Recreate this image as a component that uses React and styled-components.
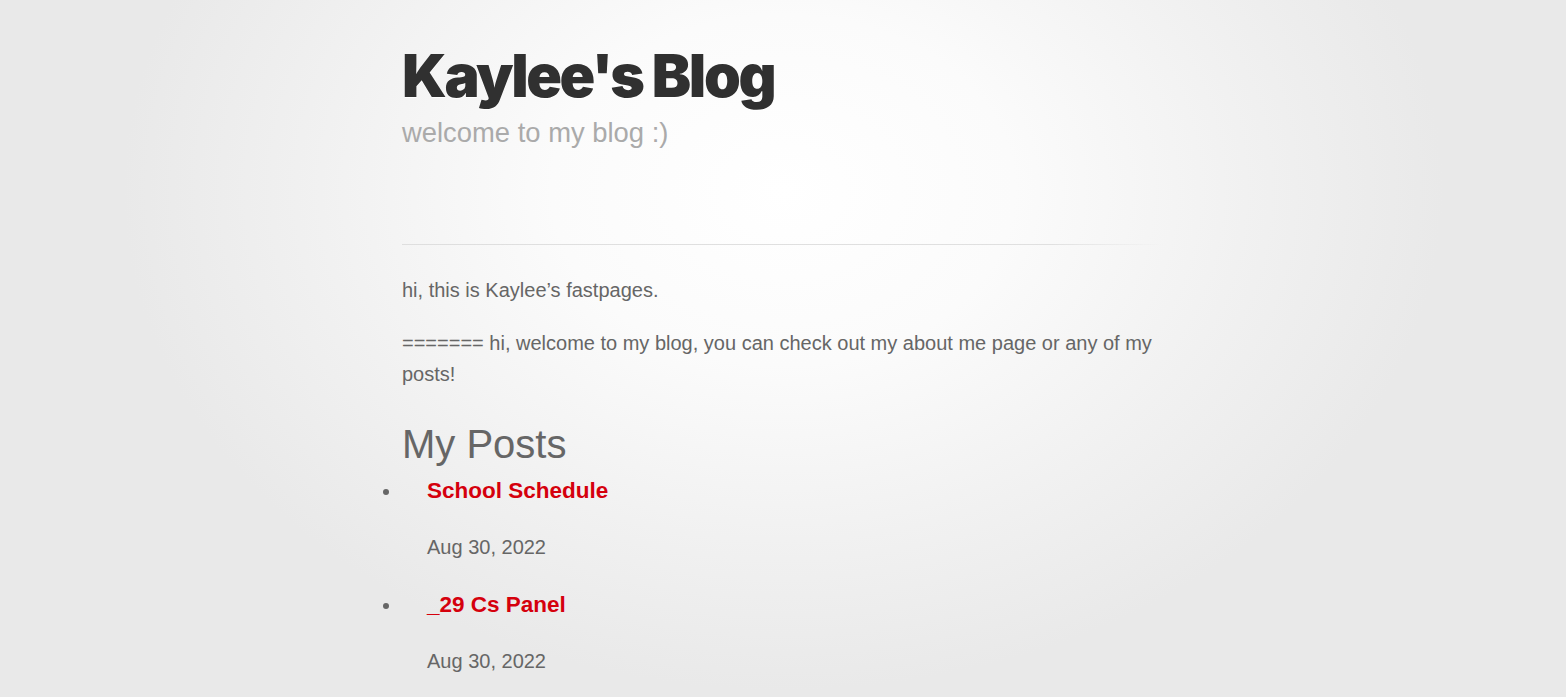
import React from "react";
import styled, { createGlobalStyle } from "styled-components";

const GlobalStyle = createGlobalStyle`
  html, body {
    margin: 0;
    padding: 0;
  }
  body {
    min-height: 100vh;
    background-color: #e9e9e9;
    background-image: radial-gradient(
      ellipse 660px 500px at 50% 190px,
      #ffffff 0%,
      #fbfbfb 35%,
      #f1f1f1 70%,
      #e9e9e9 100%
    );
    background-repeat: no-repeat;
    font-family: "Liberation Sans", Arial, Helvetica, sans-serif;
    font-size: 20px;
    line-height: 31px;
    color: #666;
  }
`;

const Inner = styled.div`
  width: 762px;
  margin: 0 auto;
`;

const Header = styled.header`
  padding-top: 40px;
  padding-bottom: 95px;
`;

const Title = styled.h1`
  margin: 0;
  font-family: Inter, Roboto, "Liberation Sans", sans-serif;
  font-size: 59px;
  font-weight: 900;
  letter-spacing: -2.4px;
  line-height: 72px;
  color: #303030;
  text-shadow: 0 1px 0 #fff;
`;

const Subtitle = styled.h2`
  margin: 4px 0 0;
  font-size: 27.4px;
  font-weight: normal;
  letter-spacing: 0;
  line-height: 33px;
  color: #aaa;
`;

const Rule = styled.hr`
  height: 1px;
  margin: 0;
  border: none;
  background: linear-gradient(
    to right,
    rgba(220, 220, 220, 0.9) 0%,
    #e0e0e0 85%,
    rgba(230, 230, 230, 0) 100%
  );
`;

const Main = styled.section`
  padding-top: 30px;
`;

const Para = styled.p`
  margin: 0 0 22px;
`;

const Heading = styled.h1`
  margin: 30px 0 0;
  font-size: 40px;
  font-weight: normal;
  line-height: 48px;
  color: #666;
`;

const PostList = styled.ul`
  margin: 8px 0 0;
  padding: 0;
  list-style: disc outside;
`;

const PostItem = styled.li`
  padding-left: 25px;
  margin-bottom: 27px;
`;

const PostLink = styled.a`
  display: block;
  font-size: 22.5px;
  font-weight: bold;
  line-height: 27px;
  color: #d5000d;
  text-decoration: none;
  margin-bottom: 28px;
`;

const PostDate = styled.p`
  margin: 0;
  font-size: 20px;
  line-height: 31px;
`;

const posts = [
  { title: "School Schedule", date: "Aug 30, 2022" },
  { title: "_29 Cs Panel", date: "Aug 30, 2022" },
];

export default function App() {
  return (
    <>
      <GlobalStyle />
      <Inner>
        <Header>
          <Title>Kaylee's Blog</Title>
          <Subtitle>welcome to my blog :)</Subtitle>
        </Header>
        <Rule />
        <Main>
          <Para>hi, this is Kaylee’s fastpages.</Para>
          <Para>
            ======= hi, welcome to my blog, you can check out my about me page
            or any of my posts!
          </Para>
          <Heading>My Posts</Heading>
          <PostList>
            {posts.map((post) => (
              <PostItem key={post.title}>
                <PostLink href="#">{post.title}</PostLink>
                <PostDate>{post.date}</PostDate>
              </PostItem>
            ))}
          </PostList>
        </Main>
      </Inner>
    </>
  );
}
